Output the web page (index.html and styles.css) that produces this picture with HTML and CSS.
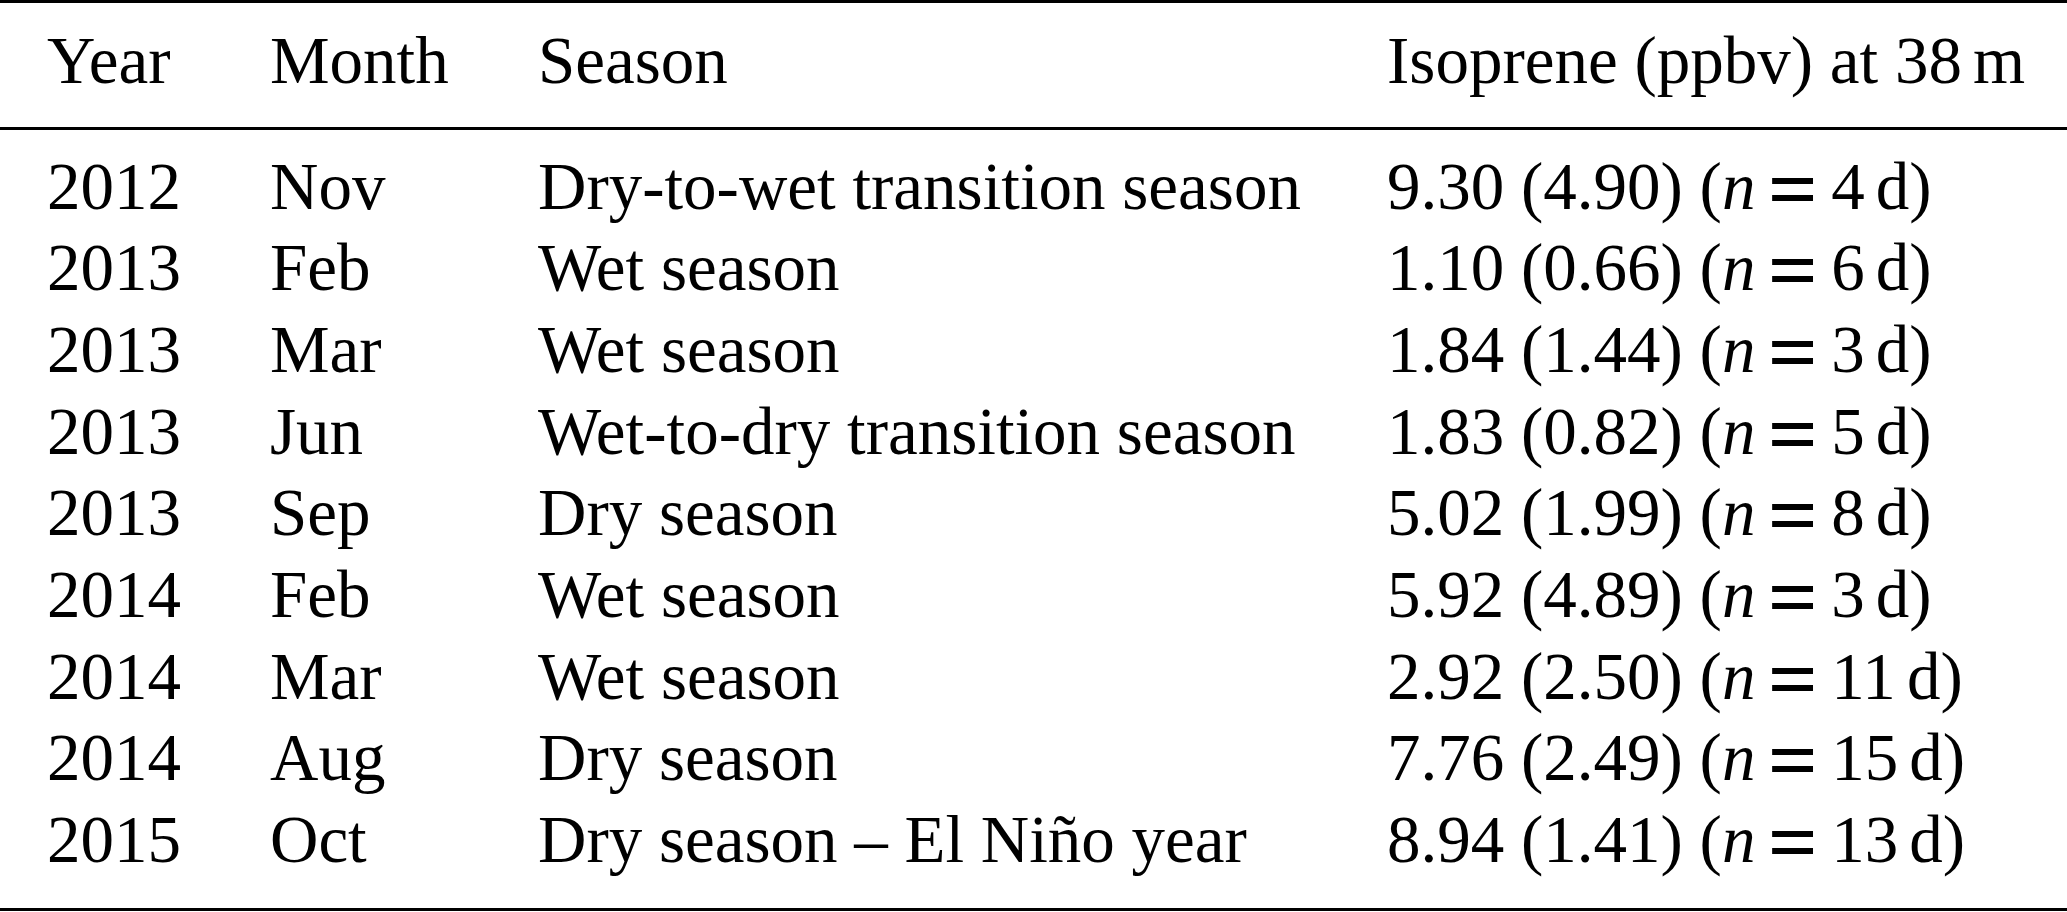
FILE: index.html
```html
<!DOCTYPE html>
<html lang="en">
<head>
<meta charset="utf-8">
<title>Isoprene table</title>
<link rel="stylesheet" href="styles.css">
</head>
<body>
<table class="data">
  <colgroup>
    <col class="c-year">
    <col class="c-month">
    <col class="c-season">
    <col class="c-iso">
  </colgroup>
  <thead>
    <tr>
      <th>Year</th>
      <th>Month</th>
      <th>Season</th>
      <th>Isoprene (ppbv) at 38<span class="thin"></span>m</th>
    </tr>
  </thead>
  <tbody>
    <tr><td>2012</td><td>Nov</td><td>Dry-to-wet transition season</td><td>9.30 (4.90) (<i>n</i><span class="eq">=</span>4<span class="thin"></span>d)</td></tr>
    <tr><td>2013</td><td>Feb</td><td>Wet season</td><td>1.10 (0.66) (<i>n</i><span class="eq">=</span>6<span class="thin"></span>d)</td></tr>
    <tr><td>2013</td><td>Mar</td><td>Wet season</td><td>1.84 (1.44) (<i>n</i><span class="eq">=</span>3<span class="thin"></span>d)</td></tr>
    <tr><td>2013</td><td>Jun</td><td>Wet-to-dry transition season</td><td>1.83 (0.82) (<i>n</i><span class="eq">=</span>5<span class="thin"></span>d)</td></tr>
    <tr><td>2013</td><td>Sep</td><td>Dry season</td><td>5.02 (1.99) (<i>n</i><span class="eq">=</span>8<span class="thin"></span>d)</td></tr>
    <tr><td>2014</td><td>Feb</td><td>Wet season</td><td>5.92 (4.89) (<i>n</i><span class="eq">=</span>3<span class="thin"></span>d)</td></tr>
    <tr><td>2014</td><td>Mar</td><td>Wet season</td><td>2.92 (2.50) (<i>n</i><span class="eq">=</span>11<span class="thin"></span>d)</td></tr>
    <tr><td>2014</td><td>Aug</td><td>Dry season</td><td>7.76 (2.49) (<i>n</i><span class="eq">=</span>15<span class="thin"></span>d)</td></tr>
    <tr><td>2015</td><td>Oct</td><td>Dry season &ndash; El Niño year</td><td>8.94 (1.41) (<i>n</i><span class="eq">=</span>13<span class="thin"></span>d)</td></tr>
  </tbody>
</table>
</body>
</html>
```

FILE: styles.css
```css
html, body {
  margin: 0;
  padding: 0;
  background: #fff;
}

body {
  font-family: "Liberation Serif", "Times New Roman", serif;
  font-size: 67px;
  color: #000;
}

.data {
  width: 2067px;
  border-collapse: collapse;
  table-layout: fixed;
  border-top: 3px solid #000;
  border-bottom: 3px solid #000;
}

.c-year { width: 270px; }
.c-month { width: 268px; }
.c-season { width: 849px; }
.c-iso { width: auto; }

.data th,
.data td {
  padding: 0;
  text-align: left;
  font-weight: normal;
  line-height: 81.7px;
  height: 81.7px;
  white-space: nowrap;
  vertical-align: top;
}

.data th:first-child,
.data td:first-child {
  padding-left: 47px;
}

.data thead th {
  padding-top: 16.5px;
  padding-bottom: 25.8px;
  border-bottom: 3px solid #000;
}

.data tbody tr:first-child td {
  padding-top: 15.5px;
}

.data tbody tr:last-child td {
  padding-bottom: 27px;
}

.data i {
  font-style: italic;
}

.eq {
  display: inline-block;
  font-size: 1.25em;
  font-weight: bold;
  line-height: 60px;
  margin: 0 14px;
  transform: translateY(9px) scaleX(1.05);
}

.thin {
  display: inline-block;
  width: 0.167em;
}
```
